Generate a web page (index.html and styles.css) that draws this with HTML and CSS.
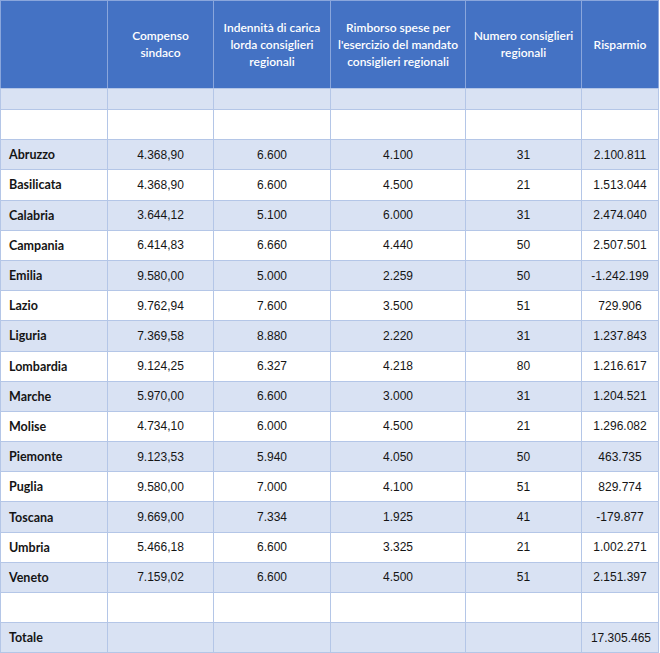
FILE: index.html
```html
<!DOCTYPE html>
<html lang="it">
<head>
<meta charset="utf-8">
<title>Risparmio consiglieri regionali</title>
<link rel="stylesheet" href="styles.css">
</head>
<body>
<table class="grid">
  <colgroup>
    <col class="c1"><col class="c2"><col class="c3"><col class="c4"><col class="c5"><col class="c6">
  </colgroup>
  <thead>
    <tr class="head">
      <th></th>
      <th>Compenso<br>sindaco</th>
      <th>Indennità di carica<br>lorda consiglieri<br>regionali</th>
      <th>Rimborso spese per<br>l'esercizio del mandato<br>consiglieri regionali</th>
      <th>Numero consiglieri<br>regionali</th>
      <th>Risparmio</th>
    </tr>
  </thead>
  <tbody>
    <tr class="alt thin"><td></td><td></td><td></td><td></td><td></td><td></td></tr>
    <tr class="row"><td></td><td></td><td></td><td></td><td></td><td></td></tr>
    <tr class="alt row"><td class="name">Abruzzo</td><td>4.368,90</td><td>6.600</td><td>4.100</td><td>31</td><td>2.100.811</td></tr>
    <tr class="row"><td class="name">Basilicata</td><td>4.368,90</td><td>6.600</td><td>4.500</td><td>21</td><td>1.513.044</td></tr>
    <tr class="alt row"><td class="name">Calabria</td><td>3.644,12</td><td>5.100</td><td>6.000</td><td>31</td><td>2.474.040</td></tr>
    <tr class="row"><td class="name">Campania</td><td>6.414,83</td><td>6.660</td><td>4.440</td><td>50</td><td>2.507.501</td></tr>
    <tr class="alt row"><td class="name">Emilia</td><td>9.580,00</td><td>5.000</td><td>2.259</td><td>50</td><td>-1.242.199</td></tr>
    <tr class="row"><td class="name">Lazio</td><td>9.762,94</td><td>7.600</td><td>3.500</td><td>51</td><td>729.906</td></tr>
    <tr class="alt row"><td class="name">Liguria</td><td>7.369,58</td><td>8.880</td><td>2.220</td><td>31</td><td>1.237.843</td></tr>
    <tr class="row"><td class="name">Lombardia</td><td>9.124,25</td><td>6.327</td><td>4.218</td><td>80</td><td>1.216.617</td></tr>
    <tr class="alt row"><td class="name">Marche</td><td>5.970,00</td><td>6.600</td><td>3.000</td><td>31</td><td>1.204.521</td></tr>
    <tr class="row"><td class="name">Molise</td><td>4.734,10</td><td>6.000</td><td>4.500</td><td>21</td><td>1.296.082</td></tr>
    <tr class="alt row"><td class="name">Piemonte</td><td>9.123,53</td><td>5.940</td><td>4.050</td><td>50</td><td>463.735</td></tr>
    <tr class="row"><td class="name">Puglia</td><td>9.580,00</td><td>7.000</td><td>4.100</td><td>51</td><td>829.774</td></tr>
    <tr class="alt row"><td class="name">Toscana</td><td>9.669,00</td><td>7.334</td><td>1.925</td><td>41</td><td>-179.877</td></tr>
    <tr class="row"><td class="name">Umbria</td><td>5.466,18</td><td>6.600</td><td>3.325</td><td>21</td><td>1.002.271</td></tr>
    <tr class="alt row"><td class="name">Veneto</td><td>7.159,02</td><td>6.600</td><td>4.500</td><td>51</td><td>2.151.397</td></tr>
    <tr class="row"><td></td><td></td><td></td><td></td><td></td><td></td></tr>
    <tr class="alt row total"><td class="name">Totale</td><td></td><td></td><td></td><td></td><td class="sum">17.305.465</td></tr>
  </tbody>
</table>
</body>
</html>
```
FILE: styles.css
```css
html, body {
  margin: 0;
  padding: 0;
  background: #ffffff;
}

.grid {
  border-collapse: collapse;
  table-layout: fixed;
  width: 658px;
  font-family: Lato, "Liberation Sans", Arial, sans-serif;
  color: #1a1a1a;
}

.c1 { width: 107px; }
.c2 { width: 106px; }
.c3 { width: 117px; }
.c4 { width: 135px; }
.c5 { width: 116px; }
.c6 { width: 77px; }

.grid td,
.grid th {
  border: 1px solid #b4c6e7;
  padding: 0;
  text-align: center;
  vertical-align: middle;
}

.head {
  height: 88px;
}

.head th {
  background: #4472c4;
  color: #ffffff;
  font-family: Lato, "Liberation Sans", Arial, sans-serif;
  font-size: 12px;
  font-weight: 600;
  line-height: 17px;
  white-space: nowrap;
  border-color: #8aa6dc;
  border-bottom-color: #b4c6e7;
  padding-bottom: 1px;
}

.thin {
  height: 21px;
}

.row {
  height: 30.2px;
}

.alt td {
  background: #d9e2f3;
}

.grid td {
  font-family: "Liberation Sans", Arial, sans-serif;
  font-size: 12px;
  color: #151515;
}

.grid td.name {
  font-family: Lato, "Liberation Sans", Arial, sans-serif;
  font-weight: bold;
  font-size: 12.5px;
  text-align: left;
  padding-left: 8px;
}

.grid td.sum {
  text-align: right;
  padding-right: 7px;
}
```
